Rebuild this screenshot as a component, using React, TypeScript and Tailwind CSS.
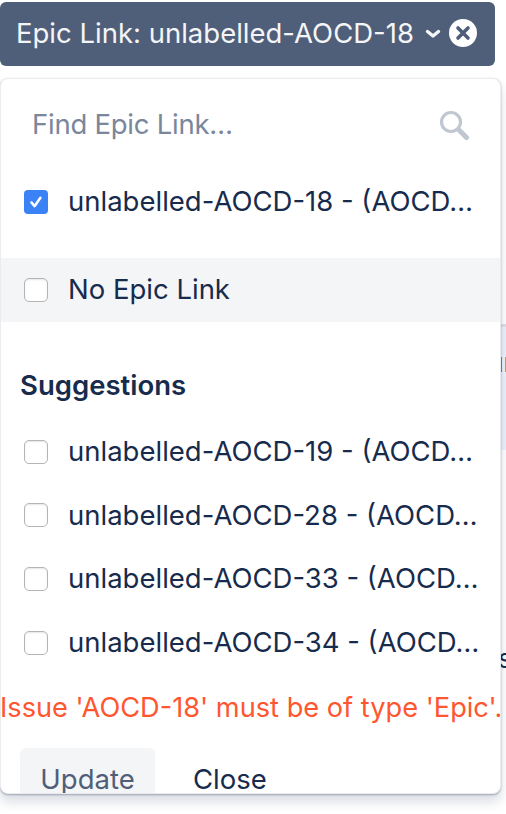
import React from "react";

const navy = "text-[#172b4d]";

function Box({ checked }: { checked?: boolean }) {
  if (checked) {
    return (
      <span className="flex h-6 w-6 shrink-0 items-center justify-center rounded-[4px] bg-[#3b82f6]">
        <svg viewBox="0 0 24 24" className="h-5 w-5" fill="none" stroke="#fff" strokeWidth="3" strokeLinecap="round" strokeLinejoin="round">
          <path d="M6.5 12.5l3.8 4.5 7-10" />
        </svg>
      </span>
    );
  }
  return <span className="h-6 w-6 shrink-0 rounded-[5px] border border-[#b5b5b5] bg-white shadow-[inset_0_1px_2px_rgba(0,0,0,0.1)]" />;
}

function Row({ label, checked, className = "h-16" }: { label: string; checked?: boolean; className?: string }) {
  return (
    <div className={`flex items-center pl-[23px] ${className}`}>
      <Box checked={checked} />
      <span className={`ml-[20px] whitespace-nowrap text-[27.5px] leading-none [font-weight:415] ${navy}`}>{label}</span>
    </div>
  );
}

export default function App() {
  return (
    <div className="relative h-[814px] w-[506px] overflow-hidden bg-white font-['Inter','Noto_Sans',sans-serif]">
      <div className="absolute left-[500px] top-[324px] h-[126px] w-[6px] border-t-[3px] border-[#dfe1e6] bg-[#eef3fb]" />
      <span className={`absolute left-[497px] top-[347px] text-[27px] leading-[32px] ${navy}`}>ıı</span>
      <span className={`absolute left-[498px] top-[643px] text-[27px] leading-[32px] ${navy}`}>s</span>
      <div className="mt-[2px] flex h-[64px] w-[495px] items-center rounded-[6px] bg-[#505f79] pl-[16px]">
        <span className="whitespace-nowrap text-[27.5px] leading-none text-[#f4f5f7] [font-weight:415]">Epic Link: unlabelled-AOCD-18</span>
        <svg viewBox="0 0 16 16" className="ml-[11px] h-4 w-4" fill="none" stroke="#f4f5f7" strokeWidth="3.4" strokeLinecap="round" strokeLinejoin="round">
          <path d="M2.5 5.5L8 10l5.5-4.5" />
        </svg>
        <svg viewBox="0 0 28 28" className="ml-[8px] -mt-[2px] h-7 w-7">
          <circle cx="14" cy="14" r="14" fill="#fff" />
          <path d="M9 9l10 10M19 9L9 19" stroke="#505f79" strokeWidth="3.6" strokeLinecap="round" />
        </svg>
      </div>
      <div className="relative mt-[12px] h-[716px] w-[501px] overflow-hidden rounded-[8px] border border-[#ebecf0] bg-white shadow-[0_8px_12px_rgba(9,30,66,0.15),0_1px_2px_rgba(9,30,66,0.3)]">
        <div className="flex h-[92px] items-center justify-between pl-[31px] pr-[30px]">
          <span className="text-[27.5px] leading-none tracking-[-0.25px] text-[#7a869a] [font-weight:415]">Find Epic Link…</span>
          <svg viewBox="0 0 32 32" className="h-8 w-8" fill="none" stroke="#c1c7d0">
            <circle cx="13" cy="13" r="9.5" strokeWidth="3.2" />
            <path d="M21 21l7.5 7.5" strokeWidth="5" strokeLinecap="round" />
          </svg>
        </div>
        <Row label="unlabelled-AOCD-18 - (AOCD…" checked className="-mt-[1px] h-16" />
        <Row label="No Epic Link" className="mt-[24px] h-16 bg-[#f4f5f7]" />
        <div className={`mb-[12px] mt-[40px] pl-[19px] text-[27.5px] font-semibold leading-[46px] ${navy}`}>Suggestions</div>
        <Row label="unlabelled-AOCD-19 - (AOCD…" className="h-[63.67px]" />
        <Row label="unlabelled-AOCD-28 - (AOCD…" className="h-[63.67px]" />
        <Row label="unlabelled-AOCD-33 - (AOCD…" className="h-[63.67px]" />
        <Row label="unlabelled-AOCD-34 - (AOCD…" className="h-[63.67px]" />
        <div className="-ml-[1px] mt-[13px] whitespace-nowrap text-[27.2px] leading-[40px] text-[#ff5630] [font-weight:415]">Issue 'AOCD-18' must be of type 'Epic'.</div>
        <div className="mt-[20px] flex items-start pl-[19px]">
          <span className="flex h-[64px] w-[135px] shrink-0 items-center justify-center rounded-[6px] bg-[#f4f5f7] text-[27.5px] leading-none text-[#505f79] [font-weight:415]">Update</span>
          <span className={`ml-[38px] flex h-[64px] items-center text-[27.5px] leading-none [font-weight:415] ${navy}`}>Close</span>
        </div>
      </div>
    </div>
  );
}
